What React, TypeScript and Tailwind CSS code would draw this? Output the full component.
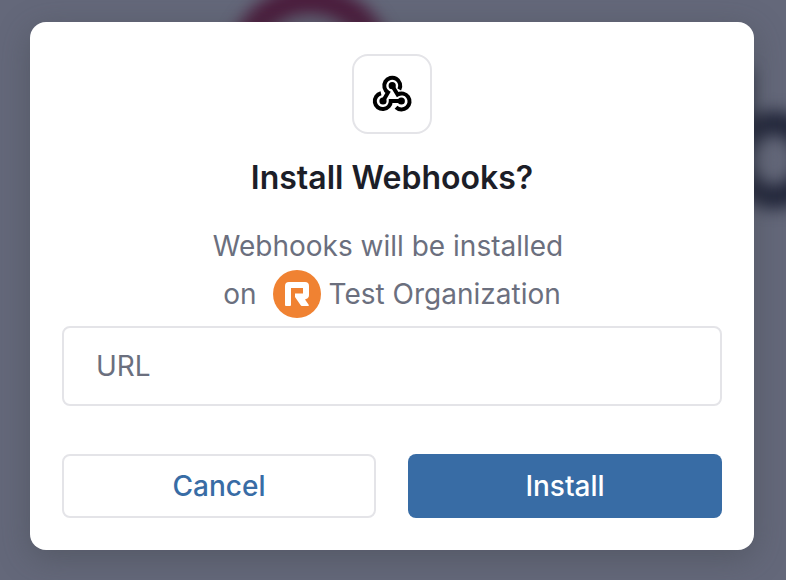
import type { FC } from 'react';

const Backdrop: FC = () => (
  <svg
    className="absolute inset-0 h-full w-full"
    aria-hidden="true"
    fill="none"
  >
    <g className="blur-[8px]">
      <circle cx="310" cy="69" r="69" stroke="#4b1c3c" strokeWidth="29" />
      <path d="M742 70V200" stroke="#262a3c" strokeWidth="20" />
      <ellipse
        cx="774"
        cy="160"
        rx="34"
        ry="37"
        stroke="#22263a"
        strokeWidth="24"
      />
    </g>
  </svg>
);

const WebhookIcon: FC = () => (
  <svg className="size-12" viewBox="0 0 48 48" fill="none" aria-hidden="true">
    <g stroke="#000" strokeWidth="4">
      <path d="M31.300 19.500A8 8 0 1 0 20 22.500L15 31" />
      <path d="M24.200 15.700L29.600 24.500A8 8 0 1 1 28 37.200" />
      <path d="M13 23.300A8 8 0 1 0 22.800 31H33.300" />
    </g>
    <g fill="#000">
      <circle cx="24.200" cy="15.700" r="3.600" />
      <circle cx="15" cy="31" r="3.600" />
      <circle cx="33.300" cy="31" r="3.600" />
    </g>
  </svg>
);

const OrganizationLogo: FC = () => (
  <svg className="size-12" viewBox="0 0 48 48" fill="none" aria-hidden="true">
    <circle cx="24" cy="24" r="24" fill="#f08232" />
    <path
      d="M13 36q-1 0-1-1V16q0-4 4-4h16q4 0 4 4v9q0 3-3 4l-1 .5 3.500 5q1 1.500-1 1.500H29q-1 0-1.500-1L22 27v-3.500h8V18H18v17q0 1-1 1z"
      fill="#fff"
    />
  </svg>
);

const InstallDialog: FC = () => (
  <div
    role="dialog"
    aria-modal="true"
    aria-labelledby="install-title"
    className="relative w-full rounded-2xl bg-white p-8 text-center text-[28px] shadow-[0_8px_32px_rgba(60,64,70,0.4)]"
  >
    <div className="mx-auto flex size-20 items-center justify-center rounded-2xl border-2 border-[#e4e4e8]">
      <WebhookIcon />
    </div>
    <h1
      id="install-title"
      className="mt-6 text-[32px] leading-10 font-semibold text-[#1c1e28]"
    >
      Install Webhooks?
    </h1>
    <div className="mt-6 leading-12 text-[#6b6f7e]">
      <p className="pr-2">Webhooks will be installed</p>
      <p className="flex items-center justify-center">
        <span className="mr-4">on</span>
        <OrganizationLogo />
        <span className="ml-2">Test Organization</span>
      </p>
    </div>
    <form onSubmit={(event) => event.preventDefault()}>
      <input
        type="url"
        aria-label="URL"
        placeholder="URL"
        className="mt-2 block h-20 w-full rounded-lg border-2 border-[#e4e4e8] px-8 text-[#1c1e28] placeholder:text-[#6b6f7e]"
      />
      <div className="mt-12 grid grid-cols-2 gap-8">
        <button
          type="button"
          className="h-16 rounded-lg border-2 border-[#e4e4e8] font-medium text-[#386ca5]"
        >
          Cancel
        </button>
        <button
          type="submit"
          className="h-16 rounded-lg bg-[#386ca5] font-medium text-white"
        >
          Install
        </button>
      </div>
    </form>
  </div>
);

export default function App() {
  return (
    <main className="relative min-h-screen overflow-hidden bg-[#64687a] py-[22px] pr-8 pl-[30px] font-['Inter',sans-serif]">
      <Backdrop />
      <InstallDialog />
    </main>
  );
}
